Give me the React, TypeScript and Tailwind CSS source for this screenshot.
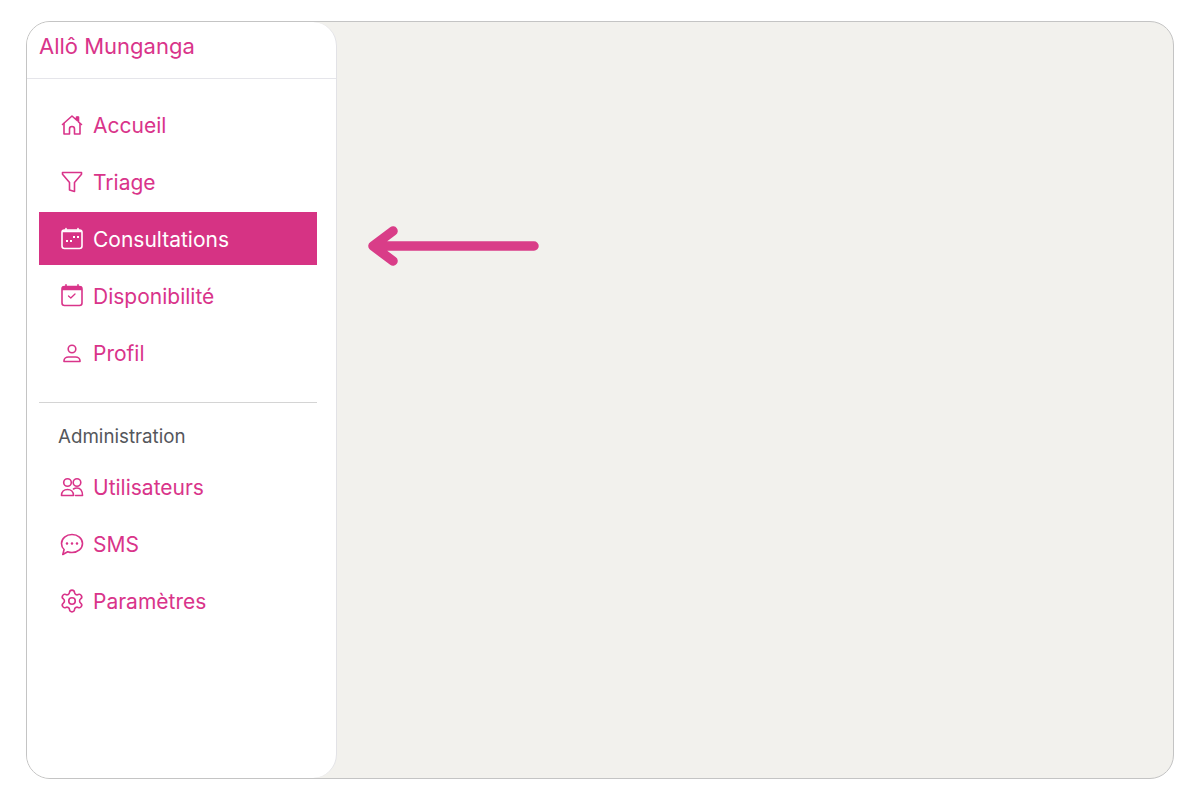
import type { ReactNode } from "react";
import { Settings } from "lucide-react";

const pink = "text-[#d9348a]";

function Icon({ children }: { children: ReactNode }) {
	return (
		<svg width="24" height="24" viewBox="0 0 24 24" fill="none" stroke="currentColor" strokeWidth="1.6" strokeLinecap="round" strokeLinejoin="round" className="shrink-0">
			{children}
		</svg>
	);
}

const HomeIcon = () => (
	<Icon>
		<path d="M2.500 11.500 12 3l4.500 4V4h2v5l3 2.500" />
		<path d="M4 10.500V21h5.500v-5a2.500 2.500 0 0 1 5 0v5H20V10.500" />
		<path d="M17.500 4.500v3" strokeWidth="2" />
	</Icon>
);

const FilterIcon = () => (
	<Icon>
		<path d="M2.500 2.500h19v1.800l-7 8.200v9L9.500 20v-7.500l-7-8.200z" />
	</Icon>
);

const CalendarDotsIcon = () => (
	<Icon>
		<rect x="2" y="3" width="20" height="18.500" rx="2.500" />
		<path d="M2.500 4.200h19" strokeWidth="2" strokeLinecap="butt" />
		<path d="M6 1.500v1.500M18 1.500v1.500" />
		<g fill="currentColor" stroke="none">
			<rect x="6" y="13" width="2" height="2" />
			<rect x="10" y="13" width="2" height="2" />
			<rect x="13" y="9" width="2" height="2" />
			<rect x="17" y="9" width="2" height="2" />
		</g>
	</Icon>
);

const CalendarCheckIcon = () => (
	<Icon>
		<rect x="2" y="2.500" width="20" height="19" rx="2.500" />
		<path d="M2 4.500h20" strokeWidth="3.500" strokeLinecap="butt" />
		<path d="M6 .8v1.500M18 .8v1.500" />
		<path d="m8.500 12 2.300 2 4.200-4" strokeWidth="1.300" />
	</Icon>
);

const UserIcon = () => (
	<Icon>
		<circle cx="12" cy="8" r="3.800" />
		<path d="M4 20.500v-.8c0-2 2-3.700 4.500-3.700h7c2.500 0 4.500 1.700 4.500 3.700v.8z" />
	</Icon>
);

const UsersIcon = () => (
	<Icon>
		<circle cx="7.500" cy="7.500" r="3.800" />
		<circle cx="17" cy="7.500" r="3.800" />
		<path d="M1.500 20.500c0-3.500 2.500-6 6-6s6 2.500 6 6z" />
		<path d="M13.500 14c1-.7 2.200-1 3.500-1 3.300 0 5.500 3 5.500 7.500h-7" />
	</Icon>
);

const ChatIcon = () => (
	<Icon>
		<path d="M12 2.500c5.800 0 10.500 4 10.500 9s-4.700 9-10.500 9c-1.500 0-3-.3-4.300-.8L2.800 22.500l1.300-5C2.400 16 1.500 13.800 1.500 11.500c0-5 4.700-9 10.500-9z" />
		<path d="M7 11.500h.01M12 11.500h.01M17 11.500h.01" strokeWidth="2.600" />
	</Icon>
);

function NavItem({ icon, label, active }: { icon: ReactNode; label: string; active?: boolean }) {
	return (
		<a className={`flex h-[53px] items-center gap-[9px] pl-[21px] text-[21px] leading-none ${active ? "bg-[#d63384] text-white" : pink}`}>
			{icon}
			<span className="pt-[2px]">{label}</span>
		</a>
	);
}

export default function App() {
	return (
		<div className="h-[800px] w-[1200px] bg-white px-[26px] py-[21px] font-['Inter',sans-serif]">
			<div className="flex h-[758px] w-[1148px] overflow-hidden rounded-[24px] border border-[#c4c4c4] bg-[#f2f1ed]">
				<aside className="flex w-[310px] flex-col rounded-r-[24px] border-r border-[#e2e2e6] bg-white">
					<div className={`h-[57px] border-b border-[#e5e5ea] pl-[12px] pt-[9px] text-[22px] leading-[30px] ${pink}`}>
						Allô Munganga
					</div>
					<nav className="flex flex-col gap-1 pl-3 pr-[19px] pt-[19px]">
						<NavItem icon={<HomeIcon />} label="Accueil" />
						<NavItem icon={<FilterIcon />} label="Triage" />
						<NavItem icon={<CalendarDotsIcon />} label="Consultations" active />
						<NavItem icon={<CalendarCheckIcon />} label="Disponibilité" />
						<NavItem icon={<UserIcon />} label="Profil" />
					</nav>
					<div className="ml-3 mr-[19px] mt-[23px] border-t border-[#d4d4d4]" />
					<p className="pl-[31px] pt-[22px] pb-[11px] text-[18.75px] leading-[24px] text-[#55575c]">Administration</p>
					<nav className="flex flex-col gap-1 pl-3 pr-[19px]">
						<NavItem icon={<UsersIcon />} label="Utilisateurs" />
						<NavItem icon={<ChatIcon />} label="SMS" />
						<NavItem icon={<Settings size={26} strokeWidth={1.5} className="-mx-px shrink-0" />} label="Paramètres" />
					</nav>
				</aside>
				<main className="flex-1 pl-[29px] pt-[202px]">
					<svg width="174" height="44" viewBox="0 0 174 44" fill="none" stroke="#d93d88" strokeWidth="9.500" strokeLinecap="round" strokeLinejoin="round">
						<path d="M168 22H7M27 7 7 22l20 15" />
					</svg>
				</main>
			</div>
		</div>
	);
}
